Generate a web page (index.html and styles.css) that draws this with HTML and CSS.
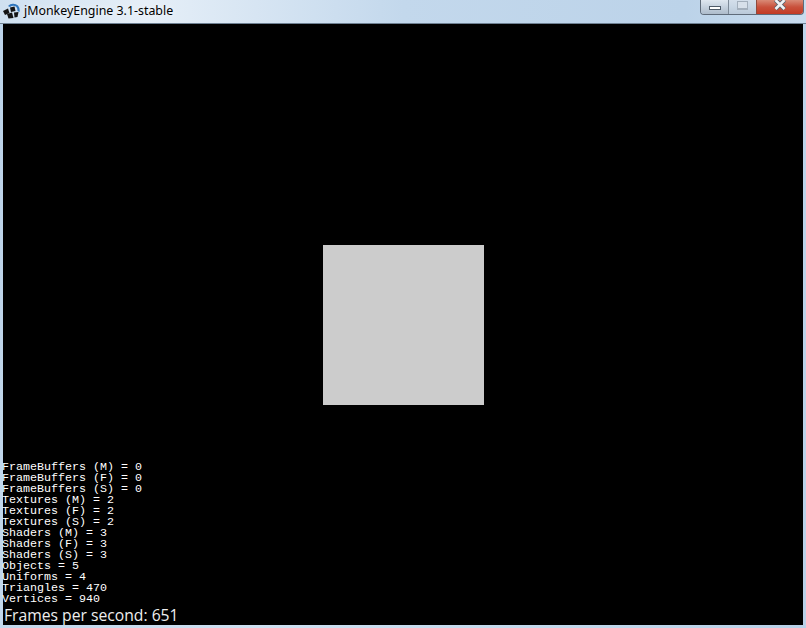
FILE: index.html
```html
<!DOCTYPE html>
<html lang="en">
<head>
    <meta charset="UTF-8">
    <title>jMonkeyEngine 3.1-stable</title>
    <link rel="stylesheet" href="styles.css">
</head>
<body>
    <div class="window">
        <div class="titlebar">
            <svg class="app-icon" width="17" height="17" viewBox="0 0 17 17">
                <path d="M5 4 A7.5 7.5 0 0 1 15 3.5 A8 8 0 0 1 16.5 10 L14.5 9 A6 6 0 0 0 13 4.5 A6 6 0 0 0 7 5 Z" fill="#2f76bd"/>
                <path d="M0 9 L5 6.5 L6.5 11 L2 13 Z" fill="#141414"/>
                <path d="M7 5.5 L11.5 4.5 L12.5 9 L8 10 Z" fill="#141414"/>
                <path d="M4 12 L9 10.5 L10.5 16 L5.5 16.5 Z" fill="#141414"/>
                <path d="M11 10.5 L15.5 10 L14.5 15 L11.5 15.5 Z" fill="#141414"/>
            </svg>
            <span class="title">jMonkeyEngine 3.1-stable</span>
            <div class="controls">
                <div class="ctl ctl-min"><span class="min-glyph"></span></div>
                <div class="ctl ctl-max"><span class="max-glyph"></span></div>
                <div class="ctl ctl-close">
                    <svg class="close-glyph" width="12" height="11" viewBox="0 0 12 11">
                        <path d="M1.5 0 L10.5 9 M10.5 0 L1.5 9" stroke="#55606c" stroke-width="4.4" fill="none"/>
                        <path d="M1.5 0 L10.5 9 M10.5 0 L1.5 9" stroke="#f1f2f4" stroke-width="2.6" fill="none"/>
                    </svg>
                </div>
            </div>
        </div>
        <div class="stage">
            <div class="box"></div>
            <div class="hud">
                <pre class="stats">FrameBuffers (M) = 0
FrameBuffers (F) = 0
FrameBuffers (S) = 0
Textures (M) = 2
Textures (F) = 2
Textures (S) = 2
Shaders (M) = 3
Shaders (F) = 3
Shaders (S) = 3
Objects = 5
Uniforms = 4
Triangles = 470
Vertices = 940</pre>
                <div class="fps">Frames per second: 651</div>
            </div>
        </div>
    </div>
</body>
</html>
```

FILE: styles.css
```css
html, body {
    margin: 0;
    padding: 0;
    height: 100%;
    overflow: hidden;
}
.window {
    width: 806px;
    height: 628px;
    box-sizing: border-box;
    padding: 0 3px 3px 3px;
    display: flex;
    flex-direction: column;
    background: linear-gradient(100deg, #bcd3e9, #cfe0f1 40%, #c4d9ec 70%, #b9d1e8);
}
.titlebar {
    height: 24px;
    display: flex;
    align-items: center;
    flex-shrink: 0;
    background: linear-gradient(90deg, #cfe0f0, #e6eff8 18%, #c3d8ec 50%, #bcd3e9 85%, #c9dcee);
    margin: 0 -3px;
    padding: 0 2px 2px 3px;
    border-bottom: 1px solid #6f8193;
    box-sizing: border-box;
}
.app-icon {
    margin-right: 4px;
}
.title {
    font-family: "Noto Sans", sans-serif;
    font-size: 12.4px;
    color: #000;
    text-shadow: 0 0 6px #fff;
}
.controls {
    margin-left: auto;
    align-self: flex-start;
    display: flex;
    height: 14px;
    border: 1px solid #5f6b7a;
    border-top: none;
    border-radius: 0 0 4px 4px;
    overflow: hidden;
}
.ctl {
    display: flex;
    align-items: center;
    justify-content: center;
    height: 100%;
    overflow: hidden;
}
.ctl-min {
    width: 27px;
    background: linear-gradient(#dfe7f0, #c5d1de 50%, #aebccb);
    border-right: 1px solid #7d8a98;
}
.ctl-max {
    width: 27px;
    background: linear-gradient(#d4dfeb, #c8d6e4 50%, #bac9d9);
    border-right: 1px solid #8f4a3c;
}
.ctl-close {
    width: 46px;
    background: linear-gradient(#d98a76, #c9513c 50%, #c23a24);
}
.min-glyph {
    width: 10px;
    height: 2px;
    margin-top: 2px;
    background: #fff;
    border: 1px solid #4f5b69;
}
.max-glyph {
    width: 9px;
    height: 6px;
    margin-top: -4px;
    border: 1px solid #a3afbc;
    border-bottom-width: 2px;
    background: #d7e0ea;
}
.close-glyph {
    margin-top: -3px;
}
.stage {
    flex: 1;
    background: #000;
    position: relative;
    display: flex;
    align-items: center;
    justify-content: center;
}
.box {
    width: 161px;
    height: 160px;
    background: #cccccc;
    margin-left: 1px;
    margin-top: 1px;
}
.hud {
    position: absolute;
    left: 0;
    bottom: 0;
    color: #fff;
}
.stats {
    margin: 0 0 0 -1px;
    font-family: "Liberation Mono", monospace;
    font-size: 11.67px;
    line-height: 11px;
}
.fps {
    font-family: "Open Sans", sans-serif;
    font-size: 15.7px;
    line-height: 20px;
    margin-left: 1px;
    color: #eee;
}
```
